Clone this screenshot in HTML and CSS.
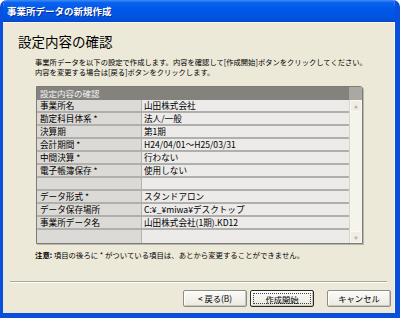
FILE: index.html
```html
<!DOCTYPE html>
<html lang="ja">
<head>
    <meta charset="UTF-8">
    <meta name="viewport" content="width=device-width, initial-scale=1.0">
    <title>事業所データの新規作成</title>
    <link rel="stylesheet" href="styles.css">
</head>
<body>
    <div class="window">
        <div class="titlebar">事業所データの新規作成</div>

        <div class="client">
            <h1>設定内容の確認</h1>
            <p class="desc">
                事業所データを以下の設定で作成します。内容を確認して[作成開始]ボタンをクリックしてください。<br>
                内容を変更する場合は[戻る]ボタンをクリックします。
            </p>

            <div class="panel">
                <div class="panel-head">
                    <div class="head-title">設定内容の確認</div>
                    <div class="head-corner"></div>
                </div>
                <div class="panel-body">
                    <div class="rows">
                        <div class="row"><div class="key">事業所名</div><div class="val">山田株式会社</div></div>
                        <div class="row"><div class="key">勘定科目体系 *</div><div class="val">法人/一般</div></div>
                        <div class="row"><div class="key">決算期</div><div class="val">第1期</div></div>
                        <div class="row"><div class="key">会計期間 *</div><div class="val">H24/04/01～H25/03/31</div></div>
                        <div class="row"><div class="key">中間決算 *</div><div class="val">行わない</div></div>
                        <div class="row"><div class="key">電子帳簿保存 *</div><div class="val">使用しない</div></div>
                        <div class="row"><div class="key"></div><div class="val"></div></div>
                        <div class="row"><div class="key">データ形式 *</div><div class="val">スタンドアロン</div></div>
                        <div class="row"><div class="key">データ保存場所</div><div class="val">C:¥_¥miwa¥デスクトップ</div></div>
                        <div class="row"><div class="key">事業所データ名</div><div class="val">山田株式会社(1期).KD12</div></div>
                        <div class="row row-last"><div class="key"></div><div class="val"></div></div>
                    </div>
                    <div class="scrollbar">
                        <div class="arrow up">&#9650;</div>
                        <div class="arrow down">&#9660;</div>
                    </div>
                </div>
            </div>

            <p class="note"><b>注意:</b> 項目の後ろに * がついている項目は、あとから変更することができません。</p>

            <div class="separator"></div>

            <div class="buttons">
                <button class="btn">&lt; 戻る(B)</button>
                <button class="btn btn-default"><span>作成開始</span></button>
                <button class="btn btn-cancel">キャンセル</button>
            </div>
        </div>
    </div>
</body>
</html>
```

FILE: styles.css
```css
:root {
    --frame-color: #0a4fdc;
    --client-color: #ece9d8;
    --head-color: #83827d;
    --key-color: #dcdad6;
    --val-color: #ecebea;
    --line-color: #b0afab;
}

* {
    box-sizing: border-box;
    margin: 0;
    padding: 0;
    font-family: 'Noto Sans CJK JP', 'Liberation Sans', sans-serif;
}

body {
    width: 400px;
    height: 318px;
    overflow: hidden;
    background-color: #ffffff;
}

.window {
    height: 318px;
    display: flex;
    flex-direction: column;
    border-left: 3px solid var(--frame-color);
    border-right: 5px solid var(--frame-color);
    border-bottom: 5px solid var(--frame-color);
    border-radius: 7px 7px 0 0;
    overflow: hidden;
}

.titlebar {
    height: 22px;
    margin-left: -3px;
    margin-right: -5px;
    padding-left: 7px;
    line-height: 22px;
    font-size: 9.5px;
    font-weight: bold;
    color: #ffffff;
    text-shadow: 1px 1px 0 #0a2a90;
    background: linear-gradient(#3d8df7 0%, #0a62ee 12%, #0058e8 45%, #0054e2 80%, #0a48c8 100%);
}

.client {
    flex: 1;
    background-color: var(--client-color);
    border-top: 1px solid #f6f5ef;
    border-right: 1px solid #f8f7f2;
    display: flex;
    flex-direction: column;
}

h1 {
    margin-top: 10px;
    padding-left: 15px;
    font-size: 13.5px;
    font-weight: normal;
    line-height: 16px;
    color: #000000;
}

.desc {
    margin-top: 8px;
    padding-left: 32px;
    font-size: 7.3px;
    line-height: 10px;
    color: #000000;
    white-space: nowrap;
}

.panel {
    margin-top: 9px;
    margin-left: 33px;
    width: 327px;
    height: 158px;
    border: 1px solid #7c7b77;
    border-radius: 0 3px 0 0;
    background-color: var(--val-color);
    display: flex;
    flex-direction: column;
    overflow: hidden;
    box-shadow: 1px 1px 0 #b9b7ad;
}

.panel-head {
    height: 13px;
    display: flex;
    flex-shrink: 0;
}

.head-title {
    flex: 1;
    background-color: var(--head-color);
    color: #f4f4f4;
    font-size: 8.5px;
    line-height: 13px;
    padding-left: 3px;
}

.head-corner {
    width: 13px;
    background-color: #a9a8a3;
}

.panel-body {
    flex: 1;
    display: flex;
}

.rows {
    flex: 1;
    display: flex;
    flex-direction: column;
}

.row {
    height: 13px;
    display: flex;
    border-bottom: 2px solid var(--line-color);
    font-size: 8.6px;
    line-height: 11px;
    color: #000000;
}

.row-last {
    flex: 1;
    border-bottom: none;
}

.key {
    width: 105px;
    padding-left: 3px;
    background-color: var(--key-color);
    border-right: 1px solid #b4b3af;
}

.val {
    flex: 1;
    padding-left: 2px;
    background-color: var(--val-color);
    white-space: nowrap;
}

.scrollbar {
    width: 13px;
    background-color: #f4f3ec;
    border-left: 1px solid #d8d6cc;
    display: flex;
    flex-direction: column;
    justify-content: space-between;
}

.arrow {
    height: 12px;
    font-size: 4px;
    line-height: 12px;
    text-align: center;
    color: #b5b3a8;
    background-color: #efede4;
    border: 1px solid #f9f8f3;
}

.note {
    margin-top: 6px;
    padding-left: 32px;
    font-size: 7.4px;
    line-height: 10px;
    color: #000000;
    white-space: nowrap;
}

.note b {
    font-weight: bold;
}

.separator {
    margin: 21px 7px 0 7px;
    height: 2px;
    border-top: 1px solid #a7a69f;
    border-bottom: 1px solid #ffffff;
}

.buttons {
    margin-top: 7px;
    padding-right: 3px;
    display: flex;
    justify-content: flex-end;
    gap: 3px;
}

.btn {
    width: 64px;
    height: 17px;
    font-size: 8.3px;
    line-height: 13px;
    color: #000000;
    background: linear-gradient(#fbfbf8, #ece9e0);
    border: 1px solid #8e8d87;
    border-radius: 2px;
    box-shadow: inset -1px -1px 0 #c9c6bc, inset 1px 1px 0 #ffffff;
}

.btn-default {
    border-color: #2a2a2a;
    padding: 2px;
}

.btn-default span {
    display: block;
    height: 11px;
    line-height: 10px;
    border: 1px dotted #444444;
}

.btn-cancel {
    margin-left: 10px;
}
```
